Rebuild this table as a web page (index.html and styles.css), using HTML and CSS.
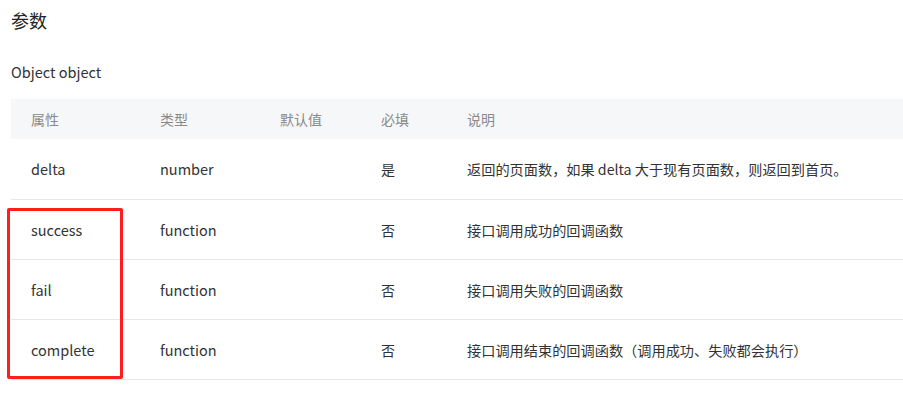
FILE: index.html
```html
<!DOCTYPE html>
<html lang="zh-CN">
<head>
<meta charset="utf-8">
<link rel="stylesheet" href="styles.css">
</head>
<body>
<div class="page">
  <h2 class="title">参数</h2>
  <p class="subtitle">Object object</p>
  <div class="table-wrap">
    <table class="params">
      <thead>
        <tr><th class="c1">属性</th><th class="c2">类型</th><th class="c3">默认值</th><th class="c4">必填</th><th class="c5">说明</th></tr>
      </thead>
      <tbody>
        <tr><td>delta</td><td>number</td><td></td><td>是</td><td>返回的页面数，如果 delta 大于现有页面数，则返回到首页。</td></tr>
        <tr><td>success</td><td>function</td><td></td><td>否</td><td>接口调用成功的回调函数</td></tr>
        <tr><td>fail</td><td>function</td><td></td><td>否</td><td>接口调用失败的回调函数</td></tr>
        <tr><td>complete</td><td>function</td><td></td><td>否</td><td>接口调用结束的回调函数（调用成功、失败都会执行）</td></tr>
      </tbody>
    </table>
    <div class="highlight"></div>
  </div>
</div>
</body>
</html>
```
FILE: styles.css
```css
html, body {
  margin: 0;
  padding: 0;
  background: #fff;
}
body {
  font-family: "Noto Sans CJK SC", "Noto Sans", sans-serif;
  color: #333;
}
.page {
  padding: 0 0 0 11px;
}
.title {
  margin: 0;
  padding-top: 7px;
  font-size: 18px;
  font-weight: normal;
  line-height: 26px;
  color: #222;
}
.subtitle {
  margin: 0;
  padding-top: 28px;
  font-size: 14.5px;
  line-height: 22px;
  color: #333;
  height: 38px;
}
.table-wrap {
  position: relative;
}
.params {
  width: 892px;
  border-collapse: collapse;
  table-layout: fixed;
  font-size: 14px;
}
.params th {
  background: #f6f7f9;
  color: #8a8a8a;
  font-weight: normal;
  text-align: left;
  height: 40px;
  padding: 0 0 0 20px;
  line-height: 20px;
}
.params td {
  height: 59px;
  padding: 0 0 0 20px;
  border-bottom: 1px solid #e5e6ea;
  line-height: 18px;
  color: #333;
  white-space: nowrap;
}
.params tbody tr:first-child td {
  height: 60px;
}
.params td:nth-child(1),
.params td:nth-child(2) {
  font-size: 14.5px;
}
.params td:nth-child(5) {
  font-size: 14.2px;
}
.c1 { width: 109px; }
.c2 { width: 100px; }
.c3 { width: 81px; }
.c4 { width: 66px; }
.highlight {
  position: absolute;
  left: -4px;
  top: 109px;
  width: 110px;
  height: 165px;
  border: 3px solid #ff1f1a;
  border-radius: 2px;
}
```
